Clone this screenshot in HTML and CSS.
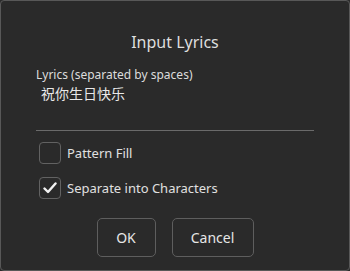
FILE: index.html
```html
<!DOCTYPE html>
<html lang="en">
<head>
    <meta charset="UTF-8">
    <title>Input Lyrics</title>
    <link rel="stylesheet" href="styles.css">
</head>
<body>
    <div class="dialog">
        <h2 class="dialog__title">Input Lyrics</h2>
        <label class="field__label" for="lyrics">Lyrics (separated by spaces)</label>
        <div class="field__value" id="lyrics">祝你生日快乐</div>
        <hr class="divider">
        <div class="check">
            <span class="check__box"></span>
            <span class="check__label">Pattern Fill</span>
        </div>
        <div class="check">
            <span class="check__box">
                <svg width="14" height="12" viewBox="0 0 14 12">
                    <path d="M1.5 6.5 L5 10 L12.5 1.5" fill="none" stroke="#f2f2f2" stroke-width="2.4" stroke-linecap="round" stroke-linejoin="round"/>
                </svg>
            </span>
            <span class="check__label">Separate into Characters</span>
        </div>
        <div class="buttons">
            <button class="btn btn--ok">OK</button>
            <button class="btn btn--cancel">Cancel</button>
        </div>
    </div>
</body>
</html>
```

FILE: styles.css
```css
*, *::after, *::before {
    margin: 0;
    padding: 0;
    box-sizing: border-box;
}

body {
    width: 350px;
    height: 271px;
    font-family: "Noto Sans", "Noto Sans CJK SC", sans-serif;
    background-color: #2a2a2a;
    color: #e0e0e0;
}

.dialog {
    width: 350px;
    height: 271px;
    padding: 29px 35px 0 35px;
    background-color: #2a2a2a;
    border: 1px solid #585858;
    border-radius: 4px;
}

.dialog__title {
    font-size: 16px;
    font-weight: 400;
    line-height: 24px;
    text-align: center;
    color: #dedede;
    margin-bottom: 12px;
}

.field__label {
    display: block;
    font-size: 12px;
    line-height: 18px;
    color: #dcdcdc;
}

.field__value {
    font-family: "Noto Sans CJK SC", sans-serif;
    font-size: 14px;
    line-height: 20px;
    padding-left: 5px;
    margin-top: -1px;
    color: #e8e8e8;
}

.divider {
    border: none;
    border-top: 1px solid #6a6a6a;
    margin-top: 27px;
    margin-bottom: 11px;
}

.check {
    display: flex;
    align-items: center;
    gap: 6px;
    padding-left: 3px;
    height: 22px;
    margin-bottom: 13px;
}

.check__box {
    width: 22px;
    height: 22px;
    border: 1px solid #626262;
    border-radius: 4px;
    display: flex;
    justify-content: center;
    align-items: center;
}

.check__label {
    font-size: 13px;
    color: #e0e0e0;
}

.buttons {
    display: flex;
    justify-content: center;
    gap: 16px;
    margin-top: 19px;
}

.btn {
    height: 39px;
    font-family: "Noto Sans", sans-serif;
    font-size: 14px;
    color: #e6e6e6;
    background-color: #2a2a2a;
    border: 1px solid #5e5e5e;
    border-radius: 5px;
}

.btn--ok {
    width: 59px;
}

.btn--cancel {
    width: 82px;
}
```
